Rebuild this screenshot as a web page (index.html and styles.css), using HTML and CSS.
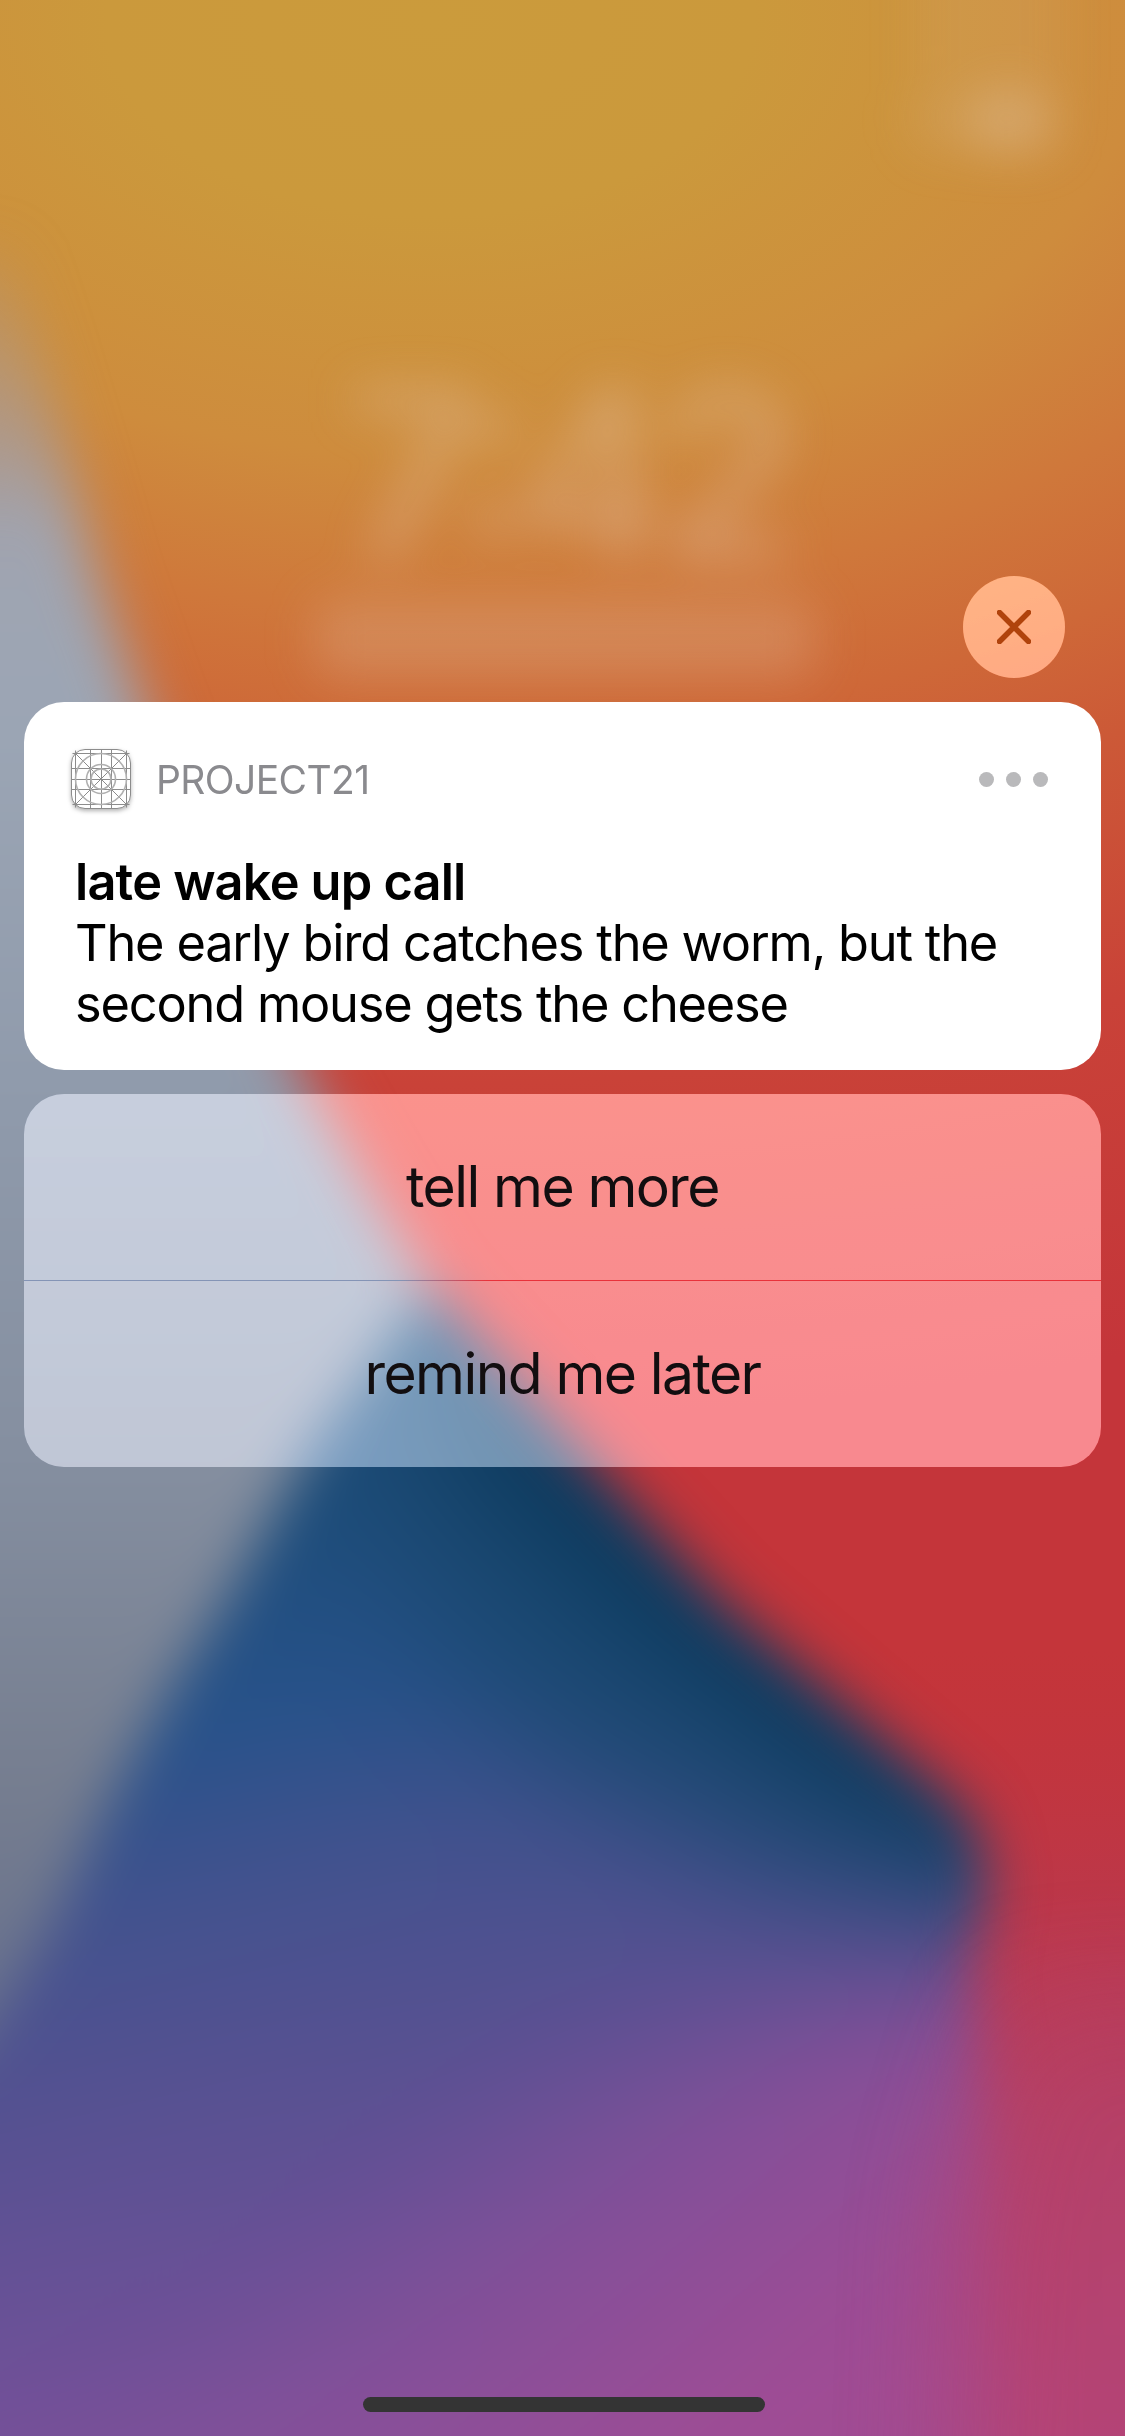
FILE: index.html
```html
<!DOCTYPE html>
<html lang="en">
<head>
<meta charset="utf-8">
<title>Notification</title>
<link rel="stylesheet" href="styles.css">
</head>
<body>
<div class="screen">
  <svg class="wallpaper" viewBox="0 0 1125 2436" aria-hidden="true">
    <defs>
      <radialGradient id="warm" gradientUnits="userSpaceOnUse" cx="0" cy="0" r="1400" gradientTransform="translate(430 20) scale(1.65 1)">
        <stop offset="0" stop-color="#cb9b3c"/>
        <stop offset=".14" stop-color="#cb993c"/>
        <stop offset=".31" stop-color="#ce8c3d"/>
        <stop offset=".42" stop-color="#cf783b"/>
        <stop offset=".51" stop-color="#ce6838"/>
        <stop offset=".59" stop-color="#cc5937"/>
        <stop offset=".76" stop-color="#c94238"/>
        <stop offset="1" stop-color="#c4353a"/>
      </radialGradient>
      <linearGradient id="pink" gradientUnits="userSpaceOnUse" x1="0" y1="1650" x2="0" y2="2436">
        <stop offset="0" stop-color="#c1343e" stop-opacity="0"/>
        <stop offset=".3" stop-color="#bd3748"/>
        <stop offset=".6" stop-color="#b54168"/>
        <stop offset="1" stop-color="#b44477"/>
      </linearGradient>
      <linearGradient id="gray" gradientUnits="userSpaceOnUse" x1="0" y1="260" x2="0" y2="2050">
        <stop offset="0" stop-color="#a89a90" stop-opacity=".2"/>
        <stop offset=".15" stop-color="#a0a4b0"/>
        <stop offset=".25" stop-color="#9ca6b5"/>
        <stop offset=".46" stop-color="#909bac"/>
        <stop offset=".67" stop-color="#858fa0"/>
        <stop offset=".85" stop-color="#767e90"/>
        <stop offset="1" stop-color="#666f8c"/>
      </linearGradient>
      <linearGradient id="violet" gradientUnits="userSpaceOnUse" x1="200" y1="1300" x2="480" y2="2500">
        <stop offset="0" stop-color="#164a75"/>
        <stop offset=".2" stop-color="#1f4e7d"/>
        <stop offset=".34" stop-color="#28528a"/>
        <stop offset=".47" stop-color="#42528e"/>
        <stop offset=".61" stop-color="#555191"/>
        <stop offset=".78" stop-color="#6a5197"/>
        <stop offset="1" stop-color="#85509b"/>
      </linearGradient>
      <linearGradient id="magenta" gradientUnits="userSpaceOnUse" x1="480" y1="2080" x2="770" y2="2413">
        <stop offset="0" stop-color="#8a509a" stop-opacity="0"/>
        <stop offset=".45" stop-color="#8c4f99" stop-opacity=".75"/>
        <stop offset="1" stop-color="#a04c94"/>
      </linearGradient>
      <filter id="soft" filterUnits="userSpaceOnUse" x="-200" y="-200" width="1525" height="2836" color-interpolation-filters="sRGB"><feGaussianBlur stdDeviation="28"/></filter>
      <filter id="softer" filterUnits="userSpaceOnUse" x="-400" y="-300" width="2000" height="3200" color-interpolation-filters="sRGB"><feGaussianBlur stdDeviation="55"/></filter>
      <filter id="ghost" filterUnits="userSpaceOnUse" x="0" y="-150" width="1325" height="1050" color-interpolation-filters="sRGB"><feGaussianBlur stdDeviation="24"/></filter>
      <clipPath id="body"><path d="M430 1285 L720 1600 L861 1720 L960 1805 Q1010 1870 970 1960 L1010 2200 L1030 2800 L-300 2800 L-300 2100 L-30 2060 L50 1930 L110 1800 L170 1690 L232 1590 L308 1450Z"/></clipPath>
    </defs>
    <rect width="1125" height="2436" fill="url(#warm)"/>
    <rect y="1650" width="1125" height="786" fill="url(#pink)"/>
    <g filter="url(#soft)">
      <path d="M-200 250 L10 250 L55 420 L98 580 L145 715 L222 900 L310 1085 L370 1190 L445 1310 L320 1550 L40 2100 L-40 2150 L-200 2150Z" fill="url(#gray)"/>
      <g clip-path="url(#body)">
        <rect x="-300" y="1250" width="1400" height="1550" fill="url(#violet)"/>
        <g filter="url(#softer)">
          <path d="M330 1300 L1100 1750 L1100 1920 L960 1925 L760 1880 L560 1780 L430 1650 L360 1500Z" fill="#1a4870" opacity=".85"/>
          <path d="M420 1250 L1120 1800 L1060 1885 L850 1800 L620 1620 L450 1450Z" fill="#0b385a" opacity=".95"/>
          <path d="M1400 1940 L950 1990 L-300 2200 L-300 2800 L1400 2800Z" fill="url(#magenta)"/>
        </g>
      </g>
    </g>
    <path d="M1020 2000 L960 2200 L940 2800 L1400 2800 L1400 2000Z" fill="url(#pink)" filter="url(#softer)" opacity=".85"/>
    <g filter="url(#ghost)" fill="#e4c9b5">
      <text class="ghost-time" x="345" y="560" textLength="455">7:42</text>
      <rect x="315" y="600" width="500" height="78" rx="20" opacity=".23"/>
      <rect x="910" y="88" width="90" height="64" rx="20" opacity=".15"/>
      <rect x="975" y="88" width="80" height="64" rx="20" opacity=".36"/>
      <rect x="915" y="-140" width="150" height="220" opacity=".1"/>
    </g>
  </svg>

  <main class="content">
    <button class="close" aria-label="Close">
      <svg viewBox="0 0 34 34" width="34" height="34"><path d="M2.5 2.5 31.5 31.5M31.5 2.5 2.5 31.5"/></svg>
    </button>

    <section class="card">
      <header class="card-head">
        <svg class="app-icon" viewBox="0 0 60 60">
          <rect x=".5" y=".5" width="59" height="59" rx="13.5" fill="#fff"/>
          <path d="M4.5 1.5V58.5M19.5.5V59.5M30.5.5V59.5M40.5.5V59.5M55.5 1.5V58.5M1.5 4.5H58.5M.5 19.5H59.5M.5 30.5H59.5M.5 40.5H59.5M1.5 55.5H58.5M4.5 4.5 55.5 55.5M55.5 4.5 4.5 55.5"/>
          <g class="rings"><circle cx="30" cy="30" r="25.5"/><circle cx="30" cy="30" r="14.5"/><circle cx="30" cy="30" r="10"/></g>
        </svg>
        <span class="app-name">PROJECT21</span>
        <span class="more"><i></i><i></i><i></i></span>
      </header>
      <h1 class="title">late wake up call</h1>
      <p class="message">The early bird catches the worm, but the<br>second mouse gets the cheese</p>
    </section>

    <nav class="actions">
      <button class="action action-more">tell me more</button>
      <button class="action action-later">remind me later</button>
    </nav>

    <div class="home-bar"></div>
  </main>
</div>
</body>
</html>
```
FILE: styles.css
```css
* { box-sizing: border-box; }

body {
  margin: 0;
  font-family: Inter, "Liberation Sans", sans-serif;
  color: #000;
}

button {
  border: 0;
  padding: 0;
  font: inherit;
  color: inherit;
}

.screen {
  display: grid;
  width: 1125px;
  height: 2436px;
  overflow: hidden;
}

.wallpaper,
.content {
  grid-area: 1 / 1;
  width: 1125px;
  height: 2436px;
}

.ghost-time {
  font-size: 235px;
  font-weight: 500;
  opacity: .42;
}

.content {
  display: flex;
  flex-direction: column;
  padding: 576px 24px 24px;
}

.close {
  display: grid;
  place-items: center;
  align-self: flex-end;
  width: 102px;
  height: 102px;
  margin: 0 36px 24px 0;
  border-radius: 50%;
  background: rgba(255, 255, 255, .38);
  backdrop-filter: saturate(1.15) brightness(1.22);
}

.close path {
  fill: none;
  stroke: #b0430c;
  stroke-width: 5.5;
  stroke-linecap: round;
}

.card {
  height: 368px;
  padding: 47px 53px 0 47px;
  border-radius: 40px;
  background: #fff;
}

.card-head {
  display: flex;
  align-items: center;
  height: 60px;
}

.app-icon {
  width: 60px;
  height: 60px;
  overflow: visible;
  fill: none;
  stroke: #8c8c8c;
  stroke-width: 1;
  filter: drop-shadow(0 2px 2px rgba(0, 0, 0, .3));
}

.rings {
  stroke: #b0b0b0;
  stroke-width: 1.6;
}

.app-name {
  margin: 1px 0 0 25px;
  font-size: 39px;
  line-height: 48px;
  letter-spacing: -.6px;
  color: #8a8a8e;
}

.more {
  display: flex;
  gap: 12px;
  margin-left: auto;
}

.more i {
  width: 15px;
  height: 15px;
  border-radius: 50%;
  background: #b9b9bb;
}

.title,
.message {
  margin: 0 0 0 4px;
  font-size: 50.5px;
  line-height: 61px;
  white-space: nowrap;
}

.title {
  margin-top: 42px;
  font-weight: 600;
  letter-spacing: -.8px;
}

.message {
  letter-spacing: -1.18px;
}

.actions {
  display: flex;
  flex-direction: column;
  height: 373px;
  margin-top: 24px;
  border-radius: 40px;
  overflow: hidden;
  background: rgba(252, 250, 255, .43);
  backdrop-filter: saturate(1.2) brightness(1.12);
}

.action {
  flex: 1;
  background: none;
  font-size: 57px;
  line-height: 68px;
  letter-spacing: -1.6px;
  color: #120e10;
}

.action-later {
  border-top: 1px solid;
  border-image: linear-gradient(90deg, #8494b6 0 35%, #e8323a 43%) 1;
}

.home-bar {
  align-self: center;
  width: 402px;
  height: 15px;
  margin-top: auto;
  margin-left: 2px;
  border-radius: 8px;
  background: #343434;
}
```
